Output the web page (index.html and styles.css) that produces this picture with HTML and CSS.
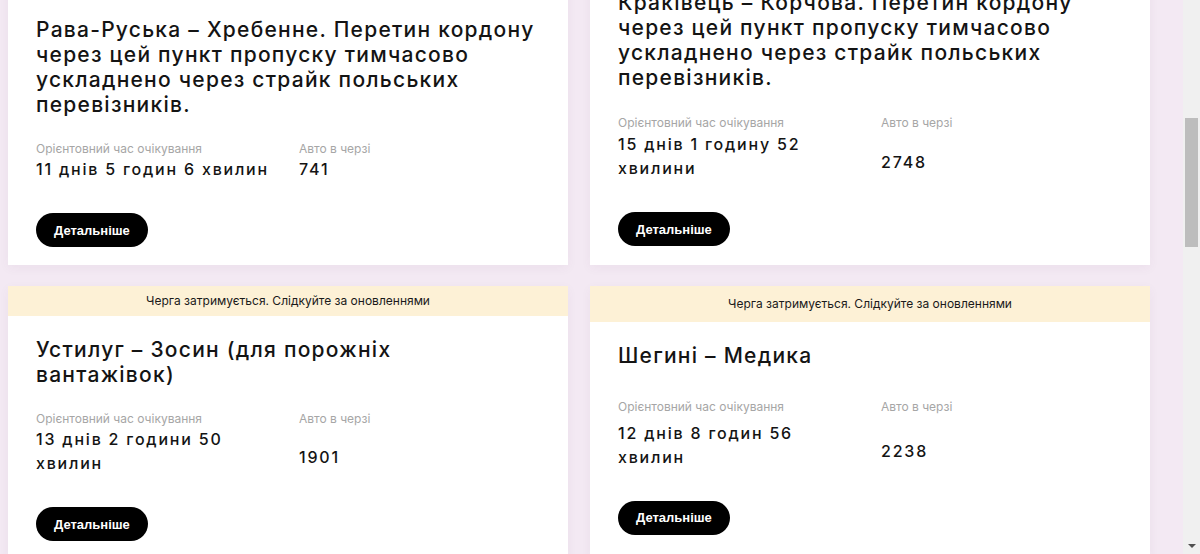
FILE: index.html
```html
<!DOCTYPE html>
<html lang="uk">
<head>
<meta charset="utf-8">
<title>Черги на кордоні</title>
<link rel="stylesheet" href="styles.css">
</head>
<body>
<div class="page">
  <main class="content">
    <div class="grid">
      <article class="card">
        <div class="card__banner">Черга затримується. Слідкуйте за оновленнями</div>
        <h3 class="card__title">Рава-Руська – Хребенне. Перетин кордону через цей пункт пропуску тимчасово ускладнено через страйк польських перевізників.</h3>
        <div class="card__stats">
          <div class="stat">
            <div class="stat__label">Орієнтовний час очікування</div>
            <div class="stat__value">11 днів 5 годин 6 хвилин</div>
          </div>
          <div class="stat">
            <div class="stat__label">Авто в черзі</div>
            <div class="stat__value">741</div>
          </div>
        </div>
        <div class="card__footer"><a class="btn" href="#">Детальніше</a></div>
      </article>

      <article class="card">
        <h3 class="card__title">Краківець – Корчова. Перетин кордону через цей пункт пропуску тимчасово ускладнено через страйк польських перевізників.</h3>
        <div class="card__stats card__stats--wrapped">
          <div class="stat">
            <div class="stat__label">Орієнтовний час очікування</div>
            <div class="stat__value">15 днів 1 годину 52 хвилини</div>
          </div>
          <div class="stat">
            <div class="stat__label">Авто в черзі</div>
            <div class="stat__value">2748</div>
          </div>
        </div>
        <div class="card__footer"><a class="btn" href="#">Детальніше</a></div>
      </article>

      <article class="card">
        <div class="card__banner">Черга затримується. Слідкуйте за оновленнями</div>
        <h3 class="card__title">Устилуг – Зосин (для порожніх<br>вантажівок)</h3>
        <div class="card__stats card__stats--wrapped">
          <div class="stat">
            <div class="stat__label">Орієнтовний час очікування</div>
            <div class="stat__value">13 днів 2 години 50 хвилин</div>
          </div>
          <div class="stat">
            <div class="stat__label">Авто в черзі</div>
            <div class="stat__value">1901</div>
          </div>
        </div>
        <div class="card__footer"><a class="btn" href="#">Детальніше</a></div>
      </article>

      <article class="card">
        <div class="card__banner">Черга затримується. Слідкуйте за оновленнями</div>
        <h3 class="card__title">Шегині – Медика</h3>
        <div class="card__stats card__stats--wrapped">
          <div class="stat">
            <div class="stat__label">Орієнтовний час очікування</div>
            <div class="stat__value">12 днів 8 годин 56 хвилин</div>
          </div>
          <div class="stat">
            <div class="stat__label">Авто в черзі</div>
            <div class="stat__value">2238</div>
          </div>
        </div>
        <div class="card__footer"><a class="btn" href="#">Детальніше</a></div>
      </article>
    </div>
  </main>
  <div class="scrollbar" aria-hidden="true">
    <div class="scrollbar__thumb"></div>
    <div class="scrollbar__arrow"></div>
  </div>
</div>
</body>
</html>
```
FILE: styles.css
```css
html, body {
  margin: 0;
  padding: 0;
}

body {
  background: #f3e9f3;
  font-family: Inter, "Noto Sans", sans-serif;
  color: #121212;
}

.page {
  display: flex;
  height: 100vh;
  overflow: hidden;
}

.content {
  flex: 1;
  min-width: 0;
  padding-left: 8px;
  overflow: hidden;
}

.grid {
  display: grid;
  grid-template-columns: 560px 560px;
  column-gap: 22px;
  row-gap: 21px;
  margin-top: -34px; /* page is scrolled */
}

.card {
  display: flex;
  flex-direction: column;
  background: #fff;
  box-shadow: 0 3px 10px rgba(90, 50, 90, 0.05);
}

.card__banner {
  flex: 1 0 30px;
  display: flex;
  align-items: center;
  justify-content: center;
  background: #fdf1d6;
  font-family: Inter, sans-serif;
  font-size: 12px;
  line-height: 16px;
  color: #1a1a1a;
}

.card__title {
  flex: 1 0 auto;
  margin: 0;
  padding: 21px 22px 24px 28px;
  font-size: 21px;
  line-height: 25px;
  font-weight: 500;
  letter-spacing: 1.25px;
  color: #141414;
}

.card__title:first-child {
  padding-top: 24px;
}

.card__stats {
  flex: 1 0 auto;
  display: grid;
  grid-template-columns: 240px 1fr;
  column-gap: 23px;
  padding: 0 25px 0 28px;
}

.stat {
  display: flex;
  flex-direction: column;
}

.stat__label {
  font-size: 12px;
  line-height: 16px;
  color: #a6a6a6;
}

.stat__value {
  margin-top: auto;
  font-size: 16px;
  line-height: 24px;
  font-weight: 500;
  letter-spacing: 1.8px;
  color: #141414;
}

.card__stats--wrapped .stat + .stat .stat__value {
  margin-bottom: 6px;
}

.card__footer {
  flex: 1 0 auto;
  display: flex;
  align-items: flex-start;
  padding: 32px 25px 18px 28px;
}

.btn {
  display: inline-flex;
  align-items: center;
  height: 34px;
  padding: 0 18px;
  border-radius: 17px;
  background: #000;
  color: #fff;
  font-family: "Liberation Sans", Arial, sans-serif;
  font-weight: 700;
  font-size: 13px;
  text-decoration: none;
}

.scrollbar {
  width: 17px;
  flex: 0 0 17px;
  display: flex;
  flex-direction: column;
  align-items: center;
  background: #f0f0f0;
}

.scrollbar__thumb {
  width: 13px;
  height: 129px;
  margin-top: 118px;
  background: #bdbdbd;
}

.scrollbar__arrow {
  margin-top: auto;
  margin-bottom: 6px;
  width: 0;
  height: 0;
  border-left: 4px solid transparent;
  border-right: 4px solid transparent;
  border-top: 4px solid #505050;
}
```
